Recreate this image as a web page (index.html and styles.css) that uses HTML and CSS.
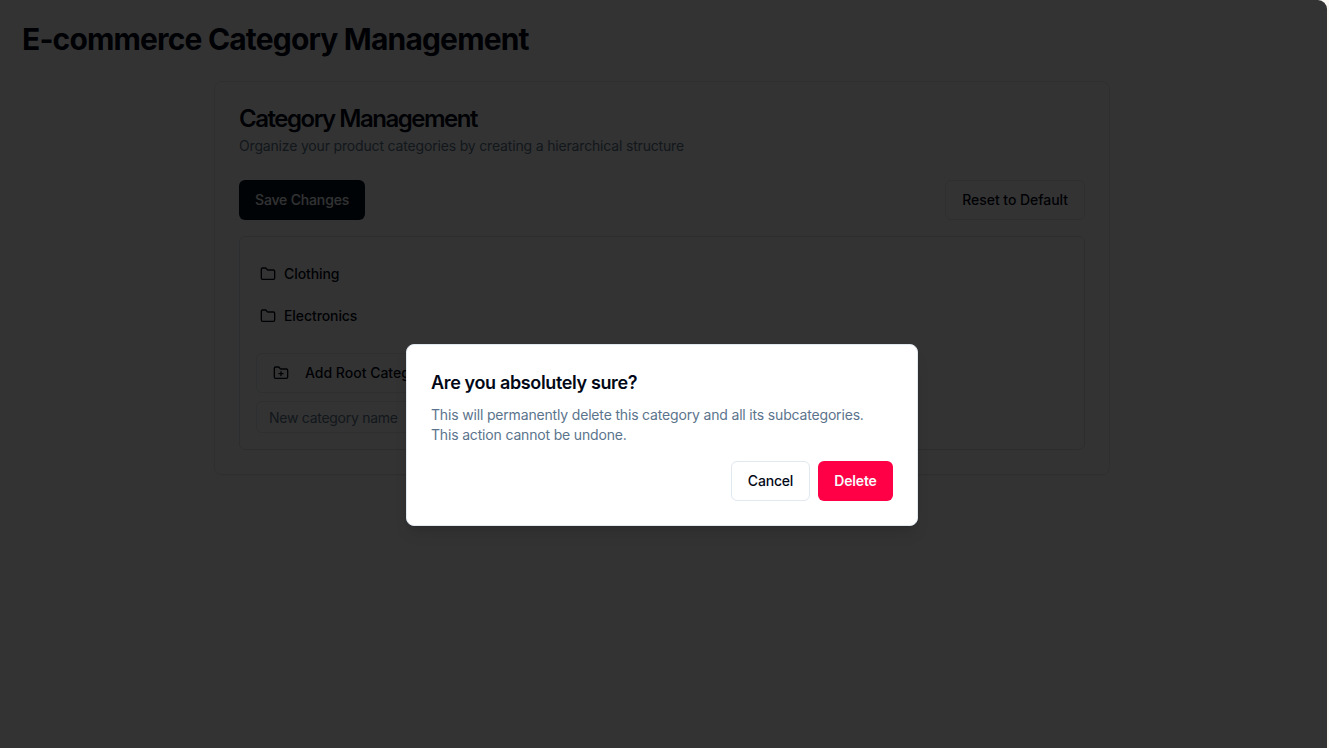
FILE: index.html
```html
<!DOCTYPE html>
<html lang="en">
<head>
<meta charset="utf-8">
<title>E-commerce Category Management</title>
<link rel="stylesheet" href="styles.css">
</head>
<body>
<div class="page">
  <h1 class="page-title">E-commerce Category Management</h1>
  <main class="card">
    <h2 class="card-title">Category Management</h2>
    <p class="card-desc">Organize your product categories by creating a hierarchical structure</p>
    <div class="toolbar">
      <button class="btn btn-primary">Save Changes</button>
      <button class="btn btn-outline btn-reset">Reset to Default</button>
    </div>
    <section class="tree">
      <div class="row">
        <svg class="icon" viewBox="0 0 24 24"><path d="M20 20a2 2 0 0 0 2-2V8a2 2 0 0 0-2-2h-7.9a2 2 0 0 1-1.69-.9L9.6 3.9A2 2 0 0 0 7.93 3H4a2 2 0 0 0-2 2v13a2 2 0 0 0 2 2Z"/></svg>
        <span>Clothing</span>
      </div>
      <div class="row">
        <svg class="icon" viewBox="0 0 24 24"><path d="M20 20a2 2 0 0 0 2-2V8a2 2 0 0 0-2-2h-7.9a2 2 0 0 1-1.69-.9L9.6 3.9A2 2 0 0 0 7.93 3H4a2 2 0 0 0-2 2v13a2 2 0 0 0 2 2Z"/></svg>
        <span>Electronics</span>
      </div>
      <div class="add">
        <button class="btn btn-outline btn-add">
          <svg class="icon" viewBox="0 0 24 24"><path d="M12 10v6M9 13h6"/><path d="M20 20a2 2 0 0 0 2-2V8a2 2 0 0 0-2-2h-7.9a2 2 0 0 1-1.69-.9L9.6 3.9A2 2 0 0 0 7.93 3H4a2 2 0 0 0-2 2v13a2 2 0 0 0 2 2Z"/></svg>
          <span>Add Root Category</span>
        </button>
        <input class="input" type="text" placeholder="New category name">
      </div>
    </section>
  </main>
  <div class="overlay">
    <div class="dialog" role="alertdialog">
      <h2 class="dialog-title">Are you absolutely sure?</h2>
      <p class="dialog-desc">This will permanently delete this category and all its subcategories. This action cannot be undone.</p>
      <div class="dialog-actions">
        <button class="btn btn-outline btn-cancel">Cancel</button>
        <button class="btn btn-danger">Delete</button>
      </div>
    </div>
  </div>
</div>
</body>
</html>
```
FILE: styles.css
```css
* { box-sizing: border-box; margin: 0; }
body {
  background: #fbf8f3;
  font: 14px/20px Inter, sans-serif;
  color: #020817;
  overflow: hidden;
}
.page {
  position: relative;
  width: 1327px;
  height: 748px;
  padding: 21px 20px;
  background: #fff;
  border-top-right-radius: 9px;
  overflow: hidden;
}
.page-title { padding-left: 2px; font-size: 30px; line-height: 36px; font-weight: 700; letter-spacing: -.83px; }
.card {
  width: 896px;
  height: 394px;
  margin: 24px 0 0 194px;
  padding: 24px;
  border: 1px solid #e2e8f0;
  border-radius: 8px;
  box-shadow: 0 1px 2px rgba(0, 0, 0, .05);
}
.card-title { padding-top: 1px; height: 24px; font-size: 24px; line-height: 24px; font-weight: 600; letter-spacing: -1.48px; }
.card-desc { margin-top: 6px; color: #5b748c; letter-spacing: -.17px; }
.toolbar { display: flex; justify-content: space-between; margin-top: 24px; }
.btn {
  display: inline-flex;
  align-items: center;
  justify-content: center;
  height: 40px;
  padding: 0 16px;
  border: 0;
  border-radius: 6px;
  font: 500 14px/20px Inter, sans-serif;
  color: #020817;
  white-space: nowrap;
}
.btn-primary { background: #001020; color: #f8fafc; letter-spacing: -.16px; }
.btn-outline { background: #fff; border: 1px solid #e0e8f0; }
.btn-reset { letter-spacing: -.04px; }
.btn-cancel { width: 79px; letter-spacing: -.2px; }
.btn-danger { width: 75px; background: #ff0046; color: #f8fafc; font-weight: 600; letter-spacing: -.16px; }
.tree {
  height: 214px;
  margin-top: 16px;
  padding: 16px;
  border: 1px solid #dbe2ea;
  border-radius: 6px;
}
.row { display: flex; align-items: center; gap: 8px; height: 42px; padding-left: 4px; font-weight: 500; letter-spacing: -.08px; }
.icon { width: 16px; height: 16px; fill: none; stroke: currentColor; stroke-width: 2; stroke-linecap: round; stroke-linejoin: round; }
.add { display: flex; flex-direction: column; align-items: flex-start; gap: 8px; margin-top: 16px; }
.btn-add { gap: 16px; }
.input {
  width: 220px;
  height: 32px;
  padding: 0 12px;
  border: 1px solid #e2e8f0;
  border-radius: 6px;
  font: 14px/20px Inter, sans-serif;
  letter-spacing: -.27px;
}
.input::placeholder { color: #5b748c; }
.overlay { position: absolute; inset: 0; background: rgba(0, 0, 0, .8); }
.dialog {
  width: 512px;
  height: 182px;
  margin: 344px 0 0 406px;
  padding: 24px;
  background: #fff;
  border: 1px solid #e0e8f0;
  border-radius: 8px;
  box-shadow: 0 10px 15px -3px rgba(0, 0, 0, .1), 0 4px 6px -4px rgba(0, 0, 0, .1);
}
.dialog-title { font-size: 18px; line-height: 28px; font-weight: 600; letter-spacing: -.36px; }
.dialog-desc { margin-top: 8px; color: #5b748c; letter-spacing: -.17px; }
.dialog-actions { display: flex; justify-content: flex-end; gap: 8px; margin-top: 16px; }
```
